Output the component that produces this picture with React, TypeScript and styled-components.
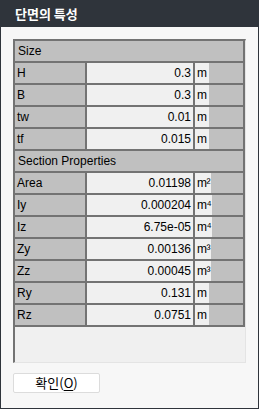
import styled, { createGlobalStyle } from 'styled-components';

interface IRow {
  label: string;
  value: string;
  unit: string;
}

interface ISection {
  title: string;
  rows: IRow[];
}

const sections: ISection[] = [
  {
    title: 'Size',
    rows: [
      { label: 'H', value: '0.3', unit: 'm' },
      { label: 'B', value: '0.3', unit: 'm' },
      { label: 'tw', value: '0.01', unit: 'm' },
      { label: 'tf', value: '0.015', unit: 'm' },
    ],
  },
  {
    title: 'Section Properties',
    rows: [
      { label: 'Area', value: '0.01198', unit: 'm²' },
      { label: 'Iy', value: '0.000204', unit: 'm⁴' },
      { label: 'Iz', value: '6.75e-05', unit: 'm⁴' },
      { label: 'Zy', value: '0.00136', unit: 'm³' },
      { label: 'Zz', value: '0.00045', unit: 'm³' },
      { label: 'Ry', value: '0.131', unit: 'm' },
      { label: 'Rz', value: '0.0751', unit: 'm' },
    ],
  },
];

const App = () => {
  return (
    <>
      <GlobalStyle />
      <Window>
        <TitleBar>단면의 특성</TitleBar>
        <Body>
          <Frame>
            <Grid>
              {sections.map((s) => (
                <Section key={s.title}>
                  <HeaderCell>{s.title}</HeaderCell>
                  {s.rows.map((r) => (
                    <Row key={r.label}>
                      <LabelCell>{r.label}</LabelCell>
                      <ValueCell>{r.value}</ValueCell>
                      <UnitCell>
                        <UnitText>{r.unit}</UnitText>
                      </UnitCell>
                    </Row>
                  ))}
                </Section>
              ))}
            </Grid>
          </Frame>
          <Button>
            확인(<u>O</u>)
          </Button>
        </Body>
      </Window>
    </>
  );
};

export default App;

const GlobalStyle = createGlobalStyle`
  html, body {
    margin: 0;
    padding: 0;
    background: #f7f7f7;
  }
  * {
    box-sizing: border-box;
  }
`;

const Window = styled.div`
  width: 259px;
  height: 409px;
  border: 1px solid #2f343b;
  border-top: none;
  background: #f7f7f7;
  display: flex;
  flex-direction: column;
  font-family: 'Liberation Sans', Arial, sans-serif;
`;

const TitleBar = styled.div`
  height: 27px;
  margin: 0 -1px;
  background: #2f343b;
  color: #ffffff;
  font-family: 'Noto Sans CJK KR', 'Noto Sans', sans-serif;
  font-size: 13px;
  font-weight: 700;
  display: flex;
  align-items: center;
  padding-left: 15px;
  padding-bottom: 1px;
`;

const Body = styled.div`
  display: flex;
  flex-direction: column;
  align-items: flex-start;
  padding: 12px 0 0 12px;
`;

const Frame = styled.div`
  width: 233px;
  height: 324px;
  border-top: 2px solid #737373;
  border-left: 2px solid #737373;
  border-right: 1px solid #e4e4e4;
  border-bottom: 1px solid #e4e4e4;
  background: #f0f0f0;
`;

const Grid = styled.div`
  display: grid;
  grid-template-columns: 70px 106px 48px;
  gap: 2px;
  width: 230px;
  padding: 0 2px 2px 0;
  background: #737373;
`;

const Section = styled.div`
  display: contents;
`;

const Row = styled.div`
  display: contents;
`;

const Cell = styled.div`
  height: 20px;
  display: flex;
  align-items: center;
  font-size: 12px;
  color: #000000;
  white-space: nowrap;
`;

const HeaderCell = styled(Cell)`
  grid-column: 1 / -1;
  background: #c0c0c0;
  padding-left: 3px;
`;

const LabelCell = styled(Cell)`
  background: #c0c0c0;
  padding-left: 2px;
`;

const ValueCell = styled(Cell)`
  background: #f0f0f0;
  justify-content: flex-end;
  padding-right: 2px;
`;

const UnitCell = styled(Cell)`
  background: #c0c0c0;
`;

const UnitText = styled.span`
  min-width: 14px;
  height: 100%;
  display: flex;
  align-items: center;
  padding: 0 1px 0 2px;
  letter-spacing: -0.5px;
  background: #f0f0f0;
`;

const Button = styled.button`
  margin-top: 10px;
  width: 87px;
  height: 20px;
  padding: 0;
  border: 1px solid #dcdcdc;
  border-radius: 2px;
  background: #ffffff;
  color: #000000;
  font-family: 'Noto Sans CJK KR', 'Noto Sans', sans-serif;
  font-size: 13px;
  line-height: 18px;
  cursor: pointer;

  u {
    text-underline-offset: 2px;
  }
`;
